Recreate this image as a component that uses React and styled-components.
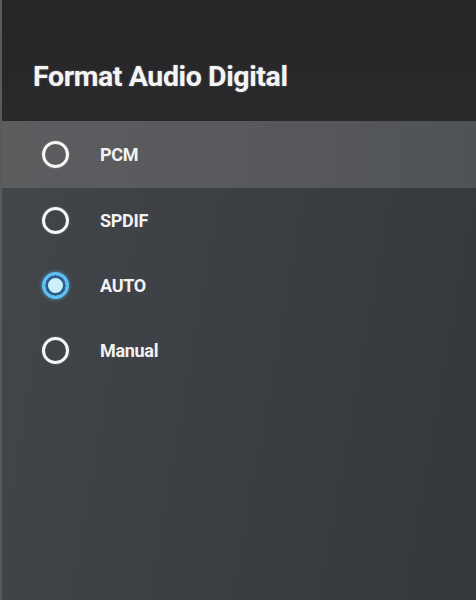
import React from "react";
import styled, { createGlobalStyle } from "styled-components";

const Global = createGlobalStyle`
  html, body {
    margin: 0;
    padding: 0;
    background: #3a3d41;
  }
  #root {
    width: 476px;
    height: 600px;
  }
`;

const Screen = styled.div`
  width: 476px;
  height: 600px;
  display: flex;
  flex-direction: column;
  overflow: hidden;
  font-family: Roboto, "Liberation Sans", sans-serif;
  background: linear-gradient(100deg, #43464a 0%, #3c3f43 45%, #34373b 100%);
  border-left: 2px solid #595b57;
  box-sizing: border-box;
`;

const Header = styled.div`
  height: 121px;
  flex-shrink: 0;
  display: flex;
  align-items: flex-start;
  padding: 59px 0 0 31px;
  box-sizing: border-box;
  background: linear-gradient(180deg, #262628 0%, #29292c 100%);
`;

const Title = styled.h1`
  margin: 0;
  color: #f4f4f4;
  font-size: 28.5px;
  line-height: 36px;
  font-weight: 700;
  letter-spacing: -0.4px;
  text-shadow: 0 0 2px rgba(255, 255, 255, 0.35);
`;

const List = styled.div`
  display: flex;
  flex-direction: column;
`;

const Row = styled.div`
  height: ${(p) => (p.$focused ? 67 : 65)}px;
  display: flex;
  align-items: center;
  gap: 31px;
  padding-left: 40px;
  box-sizing: border-box;
  background: ${(p) =>
    p.$focused
      ? "linear-gradient(90deg, #5c5d5f 0%, #58595c 50%, #505356 100%)"
      : "transparent"};
`;

const Radio = styled.span`
  width: 27px;
  height: 27px;
  box-sizing: border-box;
  border-radius: 50%;
  flex-shrink: 0;
  border: 3.5px solid ${(p) => (p.$checked ? "#5cc0f4" : "#f6f6f6")};
  background: ${(p) => (p.$checked ? "#cdeffc" : "transparent")};
  box-shadow: ${(p) =>
    p.$checked
      ? "inset 0 0 0 3px #2a5f8c, 0 0 4px rgba(92, 192, 244, 0.6)"
      : "0 0 2px rgba(255, 255, 255, 0.3)"};
`;

const Label = styled.span`
  color: #f2f2f2;
  font-size: 18px;
  font-weight: 700;
  letter-spacing: -0.3px;
`;

const options = [
  { label: "PCM", focused: true },
  { label: "SPDIF" },
  { label: "AUTO", checked: true },
  { label: "Manual" },
];

const App = () => {
  return (
    <>
      <Global />
      <Screen>
        <Header>
          <Title>Format Audio Digital</Title>
        </Header>
        <List>
          {options.map((opt) => (
            <Row key={opt.label} $focused={opt.focused}>
              <Radio $checked={opt.checked} />
              <Label>{opt.label}</Label>
            </Row>
          ))}
        </List>
      </Screen>
    </>
  );
};

export default App;
